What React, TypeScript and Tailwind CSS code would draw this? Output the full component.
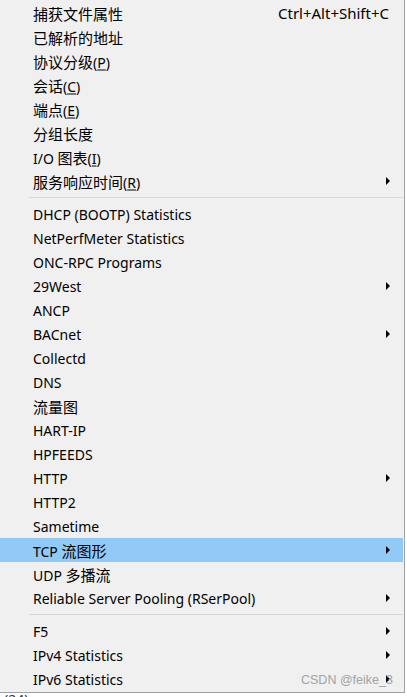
import React from "react";

type Item = {
  label: React.ReactNode;
  shortcut?: string;
  sub?: boolean;
  active?: boolean;
};

// CJK runs are set a pixel larger than the latin text, as in the Windows menu font
function T({ s }: { s: string }) {
  var parts = s.split(/([\u3400-\u9fff]+)/);
  return (
    <>
      {parts.map((p, i) =>
        /[\u3400-\u9fff]/.test(p) ? (
          <span key={i} className="text-[15px]">
            {p}
          </span>
        ) : (
          <React.Fragment key={i}>{p}</React.Fragment>
        )
      )}
    </>
  );
}

function M({ pre, k }: { pre: string; k: string }) {
  return (
    <>
      <T s={pre} />(<span className="underline underline-offset-2">{k}</span>)
    </>
  );
}

var groupA: Item[] = [
  { label: <T s="捕获文件属性" />, shortcut: "Ctrl+Alt+Shift+C" },
  { label: <T s="已解析的地址" /> },
  { label: <M pre="协议分级" k="P" /> },
  { label: <M pre="会话" k="C" /> },
  { label: <M pre="端点" k="E" /> },
  { label: <T s="分组长度" /> },
  { label: <M pre="I/O 图表" k="I" /> },
  { label: <M pre="服务响应时间" k="R" />, sub: true },
];

var groupB: Item[] = [
  { label: "DHCP (BOOTP) Statistics" },
  { label: "NetPerfMeter Statistics" },
  { label: "ONC-RPC Programs" },
  { label: "29West", sub: true },
  { label: "ANCP" },
  { label: "BACnet", sub: true },
  { label: "Collectd" },
  { label: "DNS" },
  { label: <T s="流量图" /> },
  { label: "HART-IP" },
  { label: "HPFEEDS" },
  { label: "HTTP", sub: true },
  { label: "HTTP2" },
  { label: "Sametime" },
  { label: <T s="TCP 流图形" />, sub: true, active: true },
  { label: <T s="UDP 多播流" /> },
  { label: "Reliable Server Pooling (RSerPool)", sub: true },
];

var groupC: Item[] = [
  { label: "F5", sub: true },
  { label: "IPv4 Statistics", sub: true },
  { label: "IPv6 Statistics", sub: true },
];

function Arrow() {
  return (
    <svg width="5" height="8" viewBox="0 0 5 8" className="block">
      <path d="M0 0 L4 4 L0 8 Z" fill="#000" />
    </svg>
  );
}

function Row({ item }: { item: Item }) {
  return (
    <div
      className={`flex items-center h-[24px] pl-[33px] pr-[12px] ${
        item.active ? "bg-[#91c9f7]" : ""
      }`}
    >
      <span className="flex-1 whitespace-nowrap translate-y-[0.5px]">{item.label}</span>
      {item.shortcut && (
        <span className="whitespace-nowrap mr-[2px] text-[15px]">{item.shortcut}</span>
      )}
      {item.sub && <Arrow />}
    </div>
  );
}

function Sep() {
  return (
    <div className="h-[9px] flex items-center pl-[29px]">
      <div className="h-px w-full bg-[#d7d7d7]" />
    </div>
  );
}

export default function App() {
  return (
    <div
      className="relative w-[407px] h-[697px] bg-white overflow-hidden text-[14px] text-black"
      style={{ fontFamily: '"Noto Sans", "Noto Sans CJK SC", sans-serif' }}
    >
      <div className="absolute left-[4px] top-[693px] text-[14px] leading-none text-[#333]">(24)</div>
      <div className="relative w-[405px] h-[693px] bg-[#f0f0f0] border-r border-b border-[#a0a0a0]">
        <div className="w-[403px] pt-[1px] leading-[24px]">
          {groupA.map((it, i) => (
            <Row key={"a" + i} item={it} />
          ))}
          <Sep />
          {groupB.map((it, i) => (
            <Row key={"b" + i} item={it} />
          ))}
          <Sep />
          {groupC.map((it, i) => (
            <Row key={"c" + i} item={it} />
          ))}
        </div>
        <div
          className="absolute left-[301px] top-[671px] text-[12.5px] leading-[18px] text-[#a3a3a3]"
          style={{ fontFamily: '"Liberation Sans", Arial, sans-serif' }}
        >
          CSDN @feike_3
        </div>
      </div>
    </div>
  );
}
